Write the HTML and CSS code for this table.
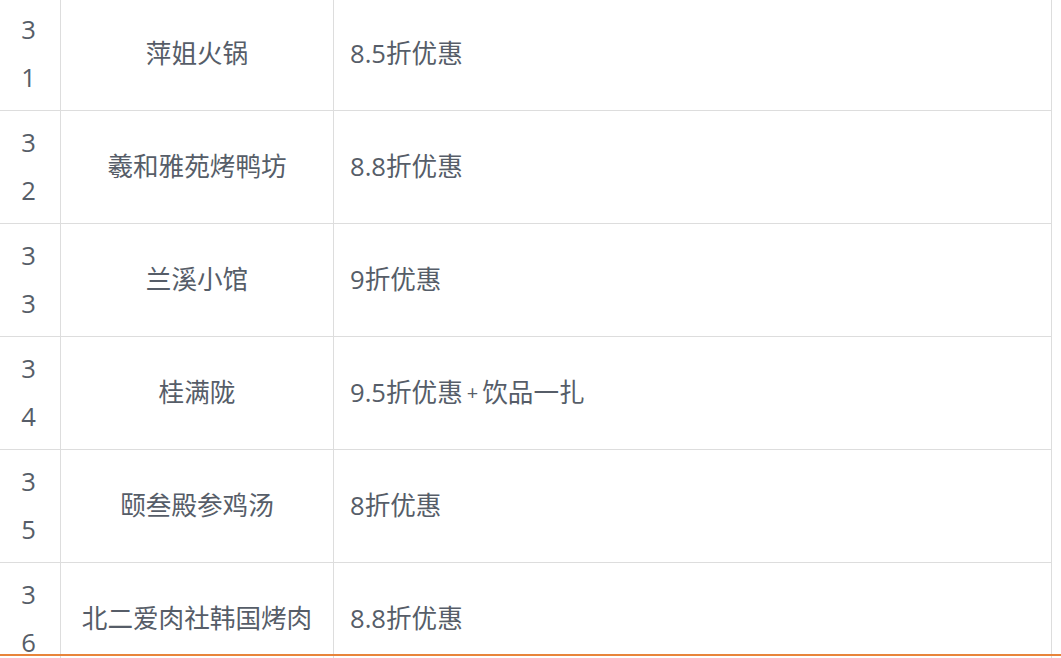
FILE: index.html
```html
<!DOCTYPE html>
<html lang="zh">
<head>
<meta charset="utf-8">
<title>优惠列表</title>
<link rel="stylesheet" href="styles.css">
</head>
<body>
<div class="page">
  <table class="deals">
    <colgroup>
      <col class="c-num">
      <col class="c-name">
      <col class="c-offer">
    </colgroup>
    <tbody>
      <tr><td class="num">31</td><td class="name">萍姐火锅</td><td class="offer">8.5折优惠</td></tr>
      <tr><td class="num">32</td><td class="name">羲和雅苑烤鸭坊</td><td class="offer">8.8折优惠</td></tr>
      <tr><td class="num">33</td><td class="name">兰溪小馆</td><td class="offer">9折优惠</td></tr>
      <tr><td class="num">34</td><td class="name">桂满陇</td><td class="offer">9.5折优惠<span class="plus">+</span>饮品一扎</td></tr>
      <tr><td class="num">35</td><td class="name">颐叁殿参鸡汤</td><td class="offer">8折优惠</td></tr>
      <tr><td class="num">36</td><td class="name">北二爱肉社韩国烤肉</td><td class="offer">8.8折优惠</td></tr>
    </tbody>
  </table>
</div>
<div class="bottom-line"></div>
</body>
</html>
```
FILE: styles.css
```css
html, body {
  margin: 0;
  padding: 0;
  background: #ffffff;
  overflow: hidden;
  height: 658px;
}

.page {
  margin-top: -3px;
  margin-left: -4px;
}

.deals {
  border-collapse: collapse;
  table-layout: fixed;
  width: 1055px;
  font-family: "Open Sans", "Noto Sans CJK SC", sans-serif;
  font-size: 25.6px;
  line-height: 48px;
  color: #565d68;
}

.c-num { width: 64px; }
.c-name { width: 273px; }
.c-offer { width: 718px; }

.deals td {
  border: 1px solid #dddddd;
  padding: 8px 8px;
  vertical-align: middle;
}

.deals td.num {
  text-align: center;
  padding: 8px 18px;
  word-break: break-all;
}

.deals td.name {
  text-align: center;
}

.deals td.offer {
  text-align: left;
  padding-left: 16px;
}

.plus {
  font-size: 20px;
  margin: 0 4px;
  vertical-align: 2px;
}

.bottom-line {
  position: fixed;
  left: 0;
  right: 0;
  bottom: 2px;
  height: 2px;
  background: #e8843a;
}
```
